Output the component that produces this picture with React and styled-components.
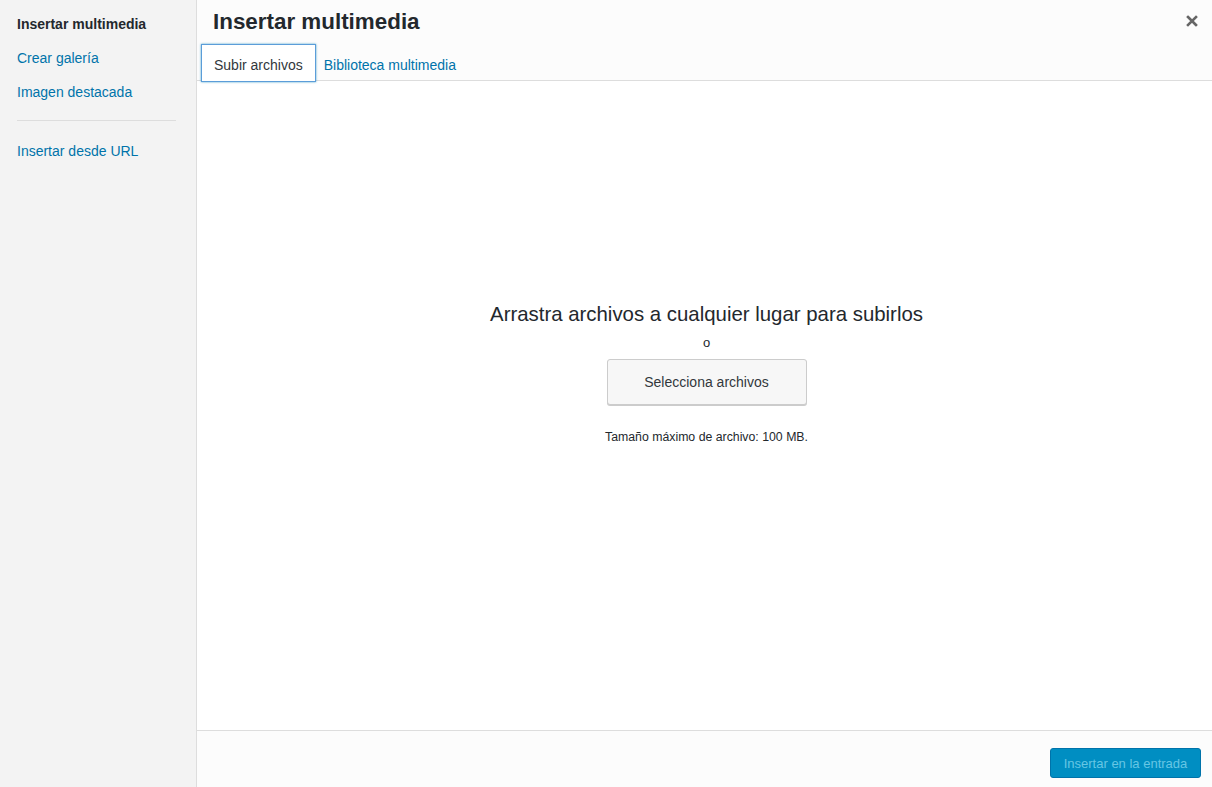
import React from "react";
import styled, { createGlobalStyle } from "styled-components";

const GlobalStyle = createGlobalStyle`
  html, body {
    margin: 0;
    padding: 0;
    height: 100%;
  }
  body {
    font-family: "Liberation Sans", Arial, sans-serif;
    background: #fff;
    color: #23282d;
  }
  #root {
    height: 100%;
  }
`;

const Frame = styled.div`
  display: flex;
  width: 1212px;
  height: 787px;
  overflow: hidden;
`;

const Menu = styled.nav`
  width: 197px;
  flex-shrink: 0;
  background: #f3f3f3;
  border-right: 1px solid #dddddd;
  padding-top: 15px;
  box-sizing: border-box;
`;

const MenuItem = styled.a`
  display: block;
  padding: 0 17px;
  height: 34px;
  line-height: 18px;
  font-size: 14px;
  text-decoration: none;
  color: ${(p) => (p.active ? "#23282d" : "#0073aa")};
  font-weight: ${(p) => (p.active ? "bold" : "normal")};
  cursor: pointer;
`;

const Separator = styled.div`
  height: 1px;
  background: #dddddd;
  margin: 3px 20px 21px 17px;
`;

const Main = styled.div`
  flex: 1;
  display: flex;
  flex-direction: column;
  min-width: 0;
`;

const Header = styled.div`
  background: #fcfcfc;
  border-bottom: 1px solid #dddddd;
  height: 81px;
  box-sizing: border-box;
  display: flex;
  flex-direction: column;
  position: relative;
`;

const Title = styled.h1`
  margin: 0;
  padding: 9px 16px 0 16px;
  font-size: 22.4px;
  font-weight: bold;
  line-height: 26px;
  color: #23282d;
`;

const CloseButton = styled.button`
  position: absolute;
  top: 11px;
  right: 10px;
  width: 20px;
  height: 20px;
  border: none;
  background: none;
  padding: 0;
  display: flex;
  align-items: center;
  justify-content: center;
  cursor: pointer;
`;

const Tabs = styled.div`
  display: flex;
  align-items: stretch;
  margin-top: 9px;
  padding-left: 4px;
  height: 37px;
`;

const Tab = styled.a`
  display: flex;
  align-items: center;
  padding: 3px 12px 0;
  font-size: 14px;
  text-decoration: none;
  cursor: pointer;
  color: ${(p) => (p.active ? "#32373c" : "#0073aa")};
  border: 1px solid ${(p) => (p.active ? "#5b9dd9" : "transparent")};
  box-shadow: ${(p) => (p.active ? "0 0 2px rgba(30,140,190,.8)" : "none")};
  background: ${(p) => (p.active ? "#fff" : "transparent")};
  box-sizing: border-box;
  height: 38px;
  ${(p) => (p.active ? "" : "padding-left: 7px;")}
`;

const Content = styled.div`
  flex: 1;
  display: flex;
  flex-direction: column;
  align-items: center;
  background: #fff;
  padding: 221px 0 0 4px;
`;

const DropTitle = styled.h2`
  margin: 0;
  font-size: 20.4px;
  font-weight: normal;
  line-height: 24px;
  color: #23282d;
`;

const Or = styled.p`
  margin: 9px 0 8px;
  font-size: 13px;
  line-height: 16px;
  color: #23282d;
`;

const SelectButton = styled.button`
  width: 200px;
  height: 46px;
  font-family: inherit;
  font-size: 14px;
  color: #32373c;
  background: #f7f7f7;
  border: 1px solid #cccccc;
  border-radius: 3px;
  box-shadow: 0 1px 0 #cccccc;
  cursor: pointer;
`;

const MaxSize = styled.p`
  margin: 24px 0 0;
  font-size: 12.3px;
  line-height: 16px;
  color: #23282d;
`;

const Footer = styled.div`
  height: 57px;
  box-sizing: border-box;
  background: #fcfcfc;
  border-top: 1px solid #dddddd;
  display: flex;
  justify-content: flex-end;
  align-items: flex-start;
  padding: 17px 11px 0 0;
`;

const PrimaryButton = styled.button`
  width: 151px;
  height: 30px;
  font-family: inherit;
  font-size: 13px;
  color: #66c6e4;
  background: #008ec2;
  border: 1px solid #0073aa;
  border-radius: 3px;
  cursor: default;
`;

const App = () => {
  return (
    <>
      <GlobalStyle />
      <Frame>
        <Menu>
          <MenuItem active>Insertar multimedia</MenuItem>
          <MenuItem>Crear galería</MenuItem>
          <MenuItem>Imagen destacada</MenuItem>
          <Separator />
          <MenuItem>Insertar desde URL</MenuItem>
        </Menu>
        <Main>
          <Header>
            <Title>Insertar multimedia</Title>
            <CloseButton aria-label="Cerrar">
              <svg width="12" height="12" viewBox="0 0 12 12">
                <path
                  d="M2 2 L10 10 M10 2 L2 10"
                  stroke="#666"
                  strokeWidth="2.6"
                  strokeLinecap="square"
                />
              </svg>
            </CloseButton>
            <Tabs>
              <Tab active>Subir archivos</Tab>
              <Tab>Biblioteca multimedia</Tab>
            </Tabs>
          </Header>
          <Content>
            <DropTitle>Arrastra archivos a cualquier lugar para subirlos</DropTitle>
            <Or>o</Or>
            <SelectButton>Selecciona archivos</SelectButton>
            <MaxSize>Tamaño máximo de archivo: 100 MB.</MaxSize>
          </Content>
          <Footer>
            <PrimaryButton disabled>Insertar en la entrada</PrimaryButton>
          </Footer>
        </Main>
      </Frame>
    </>
  );
};

export default App;
